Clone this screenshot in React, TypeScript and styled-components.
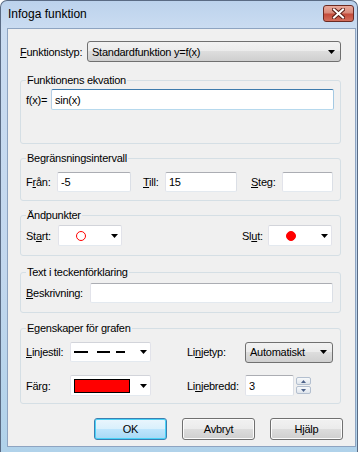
import React from 'react';
import styled, { createGlobalStyle } from 'styled-components';

const GlobalStyle = createGlobalStyle`
    html, body {
        margin: 0;
        padding: 0;
        background: #ffffff;
        overflow: hidden;
    }
    body {
        font-family: "Liberation Sans", Arial, sans-serif;
        font-size: 11px;
        letter-spacing: -0.25px;
        color: #000000;
    }
    u {
        text-underline-offset: 1px;
    }
`;

const Window = styled('div')`
    width: 358px;
    height: 452px;
    box-sizing: border-box;
    border: 1px solid #5a6b84;
    border-bottom: none;
    border-radius: 7px 7px 0 0;
    background: linear-gradient(to bottom, #bcd2ec 0, #cadcf1 27px, #c2d7ee 60%, #b0d2ea 100%);
    display: flex;
    flex-direction: column;
`;

const TitleBar = styled('div')`
    height: 27px;
    flex: none;
    display: flex;
    justify-content: space-between;
    align-items: flex-start;
    padding: 0 3px 0 7px;
`;

const Caption = styled('span')`
    font-size: 12px;
    line-height: 14px;
    letter-spacing: 0;
    margin-top: 6px;
`;

const CloseButton = styled('div')`
    width: 31px;
    height: 17px;
    margin-top: 4px;
    box-sizing: border-box;
    border: 1px solid #6b2a22;
    border-radius: 3px;
    background: linear-gradient(to bottom, #e9a99b 0%, #d98a7b 45%, #c44b3b 55%, #d36e5c 100%);
    display: flex;
    align-items: center;
    justify-content: center;
`;

const Client = styled('div')`
    flex: 1;
    margin: 0 1px 5px 6px;
    border: 1px solid #8ea4c1;
    background: #f0f0f0;
    padding: 12px 14px 0 12px;
    display: flex;
    flex-direction: column;
`;

const TypeRow = styled('div')`
    display: flex;
    align-items: center;
    height: 21px;
`;

const Label = styled('span')<{ $w: number }>`
    width: ${(p) => p.$w}px;
    flex: none;
    white-space: nowrap;
`;

const Select = styled('div')<{ $w?: number }>`
    ${(p) => (p.$w ? `width: ${p.$w}px; flex: none;` : 'flex: 1;')}
    height: 21px;
    box-sizing: border-box;
    border: 1px solid #707070;
    border-radius: 3px;
    background: linear-gradient(to bottom, #f2f2f2 0%, #ebebeb 50%, #dddddd 50%, #cfcfcf 100%);
    display: flex;
    align-items: center;
    justify-content: space-between;
    padding: 0 5px 0 4px;
`;

const Group = styled('fieldset')<{ $mt: number; $pt: number; $pb: number }>`
    margin: ${(p) => p.$mt}px 0 0 0;
    padding: ${(p) => p.$pt}px 6px ${(p) => p.$pb}px 5px;
    border: 1px solid #d5dfe5;
    border-radius: 3px;
    min-width: 0;
`;

const Legend = styled('legend')`
    padding: 0 1px;
    line-height: 13px;
`;

const Row = styled('div')<{ $h: number }>`
    display: flex;
    align-items: center;
    height: ${(p) => p.$h}px;
`;

const Edit = styled('input')<{ $w?: number; $h: number; $focus?: boolean }>`
    ${(p) => (p.$w ? `width: ${p.$w}px; flex: none;` : 'flex: 1; min-width: 0;')}
    height: ${(p) => p.$h}px;
    margin: 0;
    box-sizing: border-box;
    padding: 0 3px;
    font: inherit;
    letter-spacing: inherit;
    color: #000;
    background: #ffffff;
    border: 1px solid;
    border-radius: 2px;
    border-color: ${(p) => (p.$focus ? '#3d7bad #a4c9e3 #b7d9ed #b5cfe7' : '#abadb3 #dbdfe6 #e3e9ef #e2e3ea')};
    outline: none;
`;

const DropList = styled('div')<{ $w: number; $h: number }>`
    width: ${(p) => p.$w}px;
    height: ${(p) => p.$h}px;
    flex: none;
    box-sizing: border-box;
    border: 1px solid;
    border-color: #d2d4da #e2e3ea #e3e9ef #e2e3ea;
    border-radius: 2px;
    background: #ffffff;
    display: flex;
    align-items: center;
    justify-content: space-between;
    padding: 0 3px 0 2px;
`;

const Marker = styled('span')<{ $filled?: boolean }>`
    width: 10px;
    height: 10px;
    box-sizing: border-box;
    margin-left: 15px;
    border-radius: 50%;
    border: 1px solid #ff0000;
    background: ${(p) => (p.$filled ? '#ff0000' : 'transparent')};
`;

const Swatch = styled('span')`
    width: 56px;
    height: 14px;
    box-sizing: border-box;
    margin-left: 1px;
    border: 1px solid #000000;
    background: #ff0000;
`;

const Spacer = styled('span')<{ $w: number }>`
    width: ${(p) => p.$w}px;
    flex: none;
`;

const PropGrid = styled('div')`
    display: grid;
    grid-template-columns: 44px 81px 36px 58px auto;
    grid-template-rows: 20px 21px;
    row-gap: 13px;
    align-items: center;
`;

const SpinWrap = styled('div')`
    display: flex;
    align-items: center;
`;

const Spinner = styled('div')`
    display: flex;
    flex-direction: column;
    gap: 1px;
    margin-left: 2px;
`;

const SpinButton = styled('div')`
    width: 15px;
    height: 8px;
    box-sizing: border-box;
    border: 1px solid #b3bfcf;
    border-radius: 2px;
    background: linear-gradient(to bottom, #f7f9fb, #dfe5ec);
    display: flex;
    align-items: center;
    justify-content: center;
`;

const ButtonRow = styled('div')`
    display: flex;
    justify-content: flex-end;
    gap: 15px;
    margin: 14px -2px 0 0;
`;

const DialogButton = styled('div')<{ $default?: boolean }>`
    width: 73px;
    height: 22px;
    box-sizing: border-box;
    border: 1px solid ${(p) => (p.$default ? '#3c7fb1' : '#707070')};
    border-radius: 3px;
    box-shadow: inset 0 0 0 1px ${(p) => (p.$default ? '#48d3f8' : '#fcfcfc')};
    background: ${(p) =>
        p.$default
            ? 'linear-gradient(to bottom, #eaf6fd 0%, #d9f0fc 50%, #bee6fd 50%, #a7d9f5 100%)'
            : 'linear-gradient(to bottom, #f2f2f2 0%, #ebebeb 50%, #dddddd 50%, #cfcfcf 100%)'};
    display: flex;
    align-items: center;
    justify-content: center;
`;

const Arrow = ({ color = '#000000' }: { color?: string }) => (
    <svg width="7" height="4" viewBox="0 0 7 4">
        <polygon points="0,0 7,0 3.5,4" fill={color} />
    </svg>
);

const SpinArrow = ({ up }: { up?: boolean }) => (
    <svg width="5" height="3" viewBox="0 0 5 3">
        <polygon points={up ? '0,3 5,3 2.5,0' : '0,0 5,0 2.5,3'} fill="#4d6289" />
    </svg>
);

const CloseGlyph = () => (
    <svg width="13" height="11" viewBox="0 0 13 11">
        <path d="M2,1.5 L11,9.5 M11,1.5 L2,9.5" stroke="#5b1d16" strokeWidth="4" strokeLinecap="square" />
        <path d="M2,1.5 L11,9.5 M11,1.5 L2,9.5" stroke="#ffffff" strokeWidth="2" strokeLinecap="square" />
    </svg>
);

const DashLine = () => (
    <svg width="54" height="4" viewBox="0 0 54 4">
        <rect x="1" y="1" width="14" height="2" fill="#000" />
        <rect x="24" y="1" width="13" height="2" fill="#000" />
        <rect x="43" y="1" width="9" height="2" fill="#000" />
    </svg>
);

export default function App() {
    return (
        <>
            <GlobalStyle />
            <Window>
                <TitleBar>
                    <Caption>Infoga funktion</Caption>
                    <CloseButton>
                        <CloseGlyph />
                    </CloseButton>
                </TitleBar>
                <Client>
                    <TypeRow>
                        <Label $w={67}>
                            <u>F</u>unktionstyp:
                        </Label>
                        <Select>
                            <span>Standardfunktion y=f(x)</span>
                            <Arrow />
                        </Select>
                    </TypeRow>

                    <Group $mt={12} $pt={2} $pb={33}>
                        <Legend>Funktionens ekvation</Legend>
                        <Row $h={21}>
                            <Label $w={25}>f(x)=</Label>
                            <Edit $h={21} $focus readOnly value="sin(x)" />
                        </Row>
                    </Group>

                    <Group $mt={8} $pt={7} $pb={8}>
                        <Legend>Begränsningsintervall</Legend>
                        <Row $h={20}>
                            <Label $w={31}>
                                F<u>r</u>ån:
                            </Label>
                            <Edit $w={74} $h={20} readOnly value="-5" />
                            <Spacer $w={12} />
                            <Label $w={22}>
                                <u>T</u>ill:
                            </Label>
                            <Edit $w={72} $h={20} readOnly value="15" />
                            <Spacer $w={14} />
                            <Label $w={31}>
                                <u>S</u>teg:
                            </Label>
                            <Edit $w={51} $h={20} readOnly value="" />
                        </Row>
                    </Group>

                    <Group $mt={8} $pt={3} $pb={9}>
                        <Legend>Ändpunkter</Legend>
                        <Row $h={21}>
                            <Label $w={32}>
                                St<u>a</u>rt:
                            </Label>
                            <DropList $w={64} $h={21}>
                                <Marker />
                                <Arrow />
                            </DropList>
                            <Spacer $w={120} />
                            <Label $w={26}>
                                Sl<u>u</u>t:
                            </Label>
                            <DropList $w={64} $h={21}>
                                <Marker $filled />
                                <Arrow />
                            </DropList>
                        </Row>
                    </Group>

                    <Group $mt={10} $pt={4} $pb={9}>
                        <Legend>Text i teckenförklaring</Legend>
                        <Row $h={20}>
                            <Label $w={64}>
                                <u>B</u>eskrivning:
                            </Label>
                            <Edit $w={243} $h={20} readOnly value="" />
                        </Row>
                    </Group>

                    <Group $mt={9} $pt={7} $pb={7}>
                        <Legend>Egenskaper för grafen</Legend>
                        <PropGrid>
                            <Label $w={44}>
                                <u>L</u>injestil:
                            </Label>
                            <DropList $w={81} $h={20}>
                                <DashLine />
                                <Arrow />
                            </DropList>
                            <span />
                            <Label $w={58}>
                                Li<u>n</u>jetyp:
                            </Label>
                            <Select $w={88}>
                                <span>Automatiskt</span>
                                <Arrow />
                            </Select>

                            <Label $w={44}>
                                Fär<u>g</u>:
                            </Label>
                            <DropList $w={81} $h={21}>
                                <Swatch />
                                <Arrow />
                            </DropList>
                            <span />
                            <Label $w={58}>
                                Li<u>n</u>jebredd:
                            </Label>
                            <SpinWrap>
                                <Edit $w={49} $h={21} readOnly value="3" />
                                <Spinner>
                                    <SpinButton>
                                        <SpinArrow up />
                                    </SpinButton>
                                    <SpinButton>
                                        <SpinArrow />
                                    </SpinButton>
                                </Spinner>
                            </SpinWrap>
                        </PropGrid>
                    </Group>

                    <ButtonRow>
                        <DialogButton $default>OK</DialogButton>
                        <DialogButton>Avbryt</DialogButton>
                        <DialogButton>Hjälp</DialogButton>
                    </ButtonRow>
                </Client>
            </Window>
        </>
    );
}
